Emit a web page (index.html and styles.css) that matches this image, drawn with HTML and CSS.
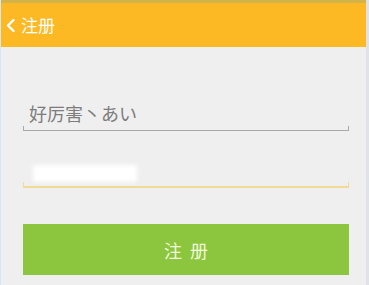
FILE: index.html
```html
<!DOCTYPE html>
<html lang="zh">
<head>
<meta charset="utf-8">
<title>注册</title>
<link rel="stylesheet" href="styles.css">
</head>
<body>
<div class="screen">
  <header class="topbar">
    <span class="back">
      <svg width="9" height="13" viewBox="0 0 9 13"><path d="M7.5 1 L2 6.5 L7.5 12" fill="none" stroke="#fff" stroke-width="2.4" stroke-linecap="round" stroke-linejoin="round"/></svg>
    </span>
    <span class="title">注册</span>
  </header>
  <main class="form">
    <div class="field">
      <span class="value">好厉害丶あい</span>
    </div>
    <div class="field focused">
      <span class="masked">••••••••••</span>
    </div>
    <button class="submit">注册</button>
  </main>
</div>
</body>
</html>
```
FILE: styles.css
```css
html, body {
  margin: 0;
  padding: 0;
  background: #efefef;
}
.screen {
  width: 369px;
  height: 285px;
  box-sizing: border-box;
  border-left: 1px solid #d3e8f4;
  border-right: 3px solid #dfe3e8;
  background: #efefef;
  font-family: "Noto Sans CJK SC", "Noto Sans", sans-serif;
  display: flex;
  flex-direction: column;
}
.topbar {
  height: 47px;
  box-sizing: border-box;
  border-top: 3px solid #d2b24a;
  background: #fcb923;
  display: flex;
  align-items: center;
  padding-left: 5px;
  gap: 6px;
  color: #fff;
}
.back {
  display: flex;
  align-items: center;
  margin-top: 1px;
}
.title {
  font-size: 17px;
  line-height: 20px;
  letter-spacing: 0;
}
.form {
  display: flex;
  flex-direction: column;
  padding: 48px 17px 0 22px;
}
.field {
  position: relative;
  height: 36px;
  box-sizing: border-box;
  padding: 6px 0 0 6px;
  border-bottom: 1px solid #a9a9a9;
}
.field::before, .field::after {
  content: "";
  position: absolute;
  bottom: 0;
  width: 1px;
  height: 4px;
  background: #a9a9a9;
}
.field::before { left: 0; }
.field::after { right: 0; }
.value {
  font-size: 18px;
  line-height: 24px;
  color: #7c7c7c;
}
.field.focused {
  margin-top: 21px;
  border-bottom: 2px solid #f2d994;
}
.field.focused::before, .field.focused::after {
  background: #f2d994;
  height: 4px;
}
.masked {
  display: inline-block;
  margin-top: 7px;
  margin-left: 4px;
  width: 104px;
  height: 17px;
  background: #fff;
  color: transparent;
  font-size: 10px;
  line-height: 17px;
  overflow: hidden;
  filter: blur(2px);
}
.submit {
  margin-top: 36px;
  height: 51px;
  border: none;
  background: #8cc63e;
  color: #f1f9dc;
  font-family: "Noto Sans CJK SC", "Noto Sans", sans-serif;
  font-size: 18px;
  letter-spacing: 8px;
  text-indent: 8px;
  padding: 0;
}
```
